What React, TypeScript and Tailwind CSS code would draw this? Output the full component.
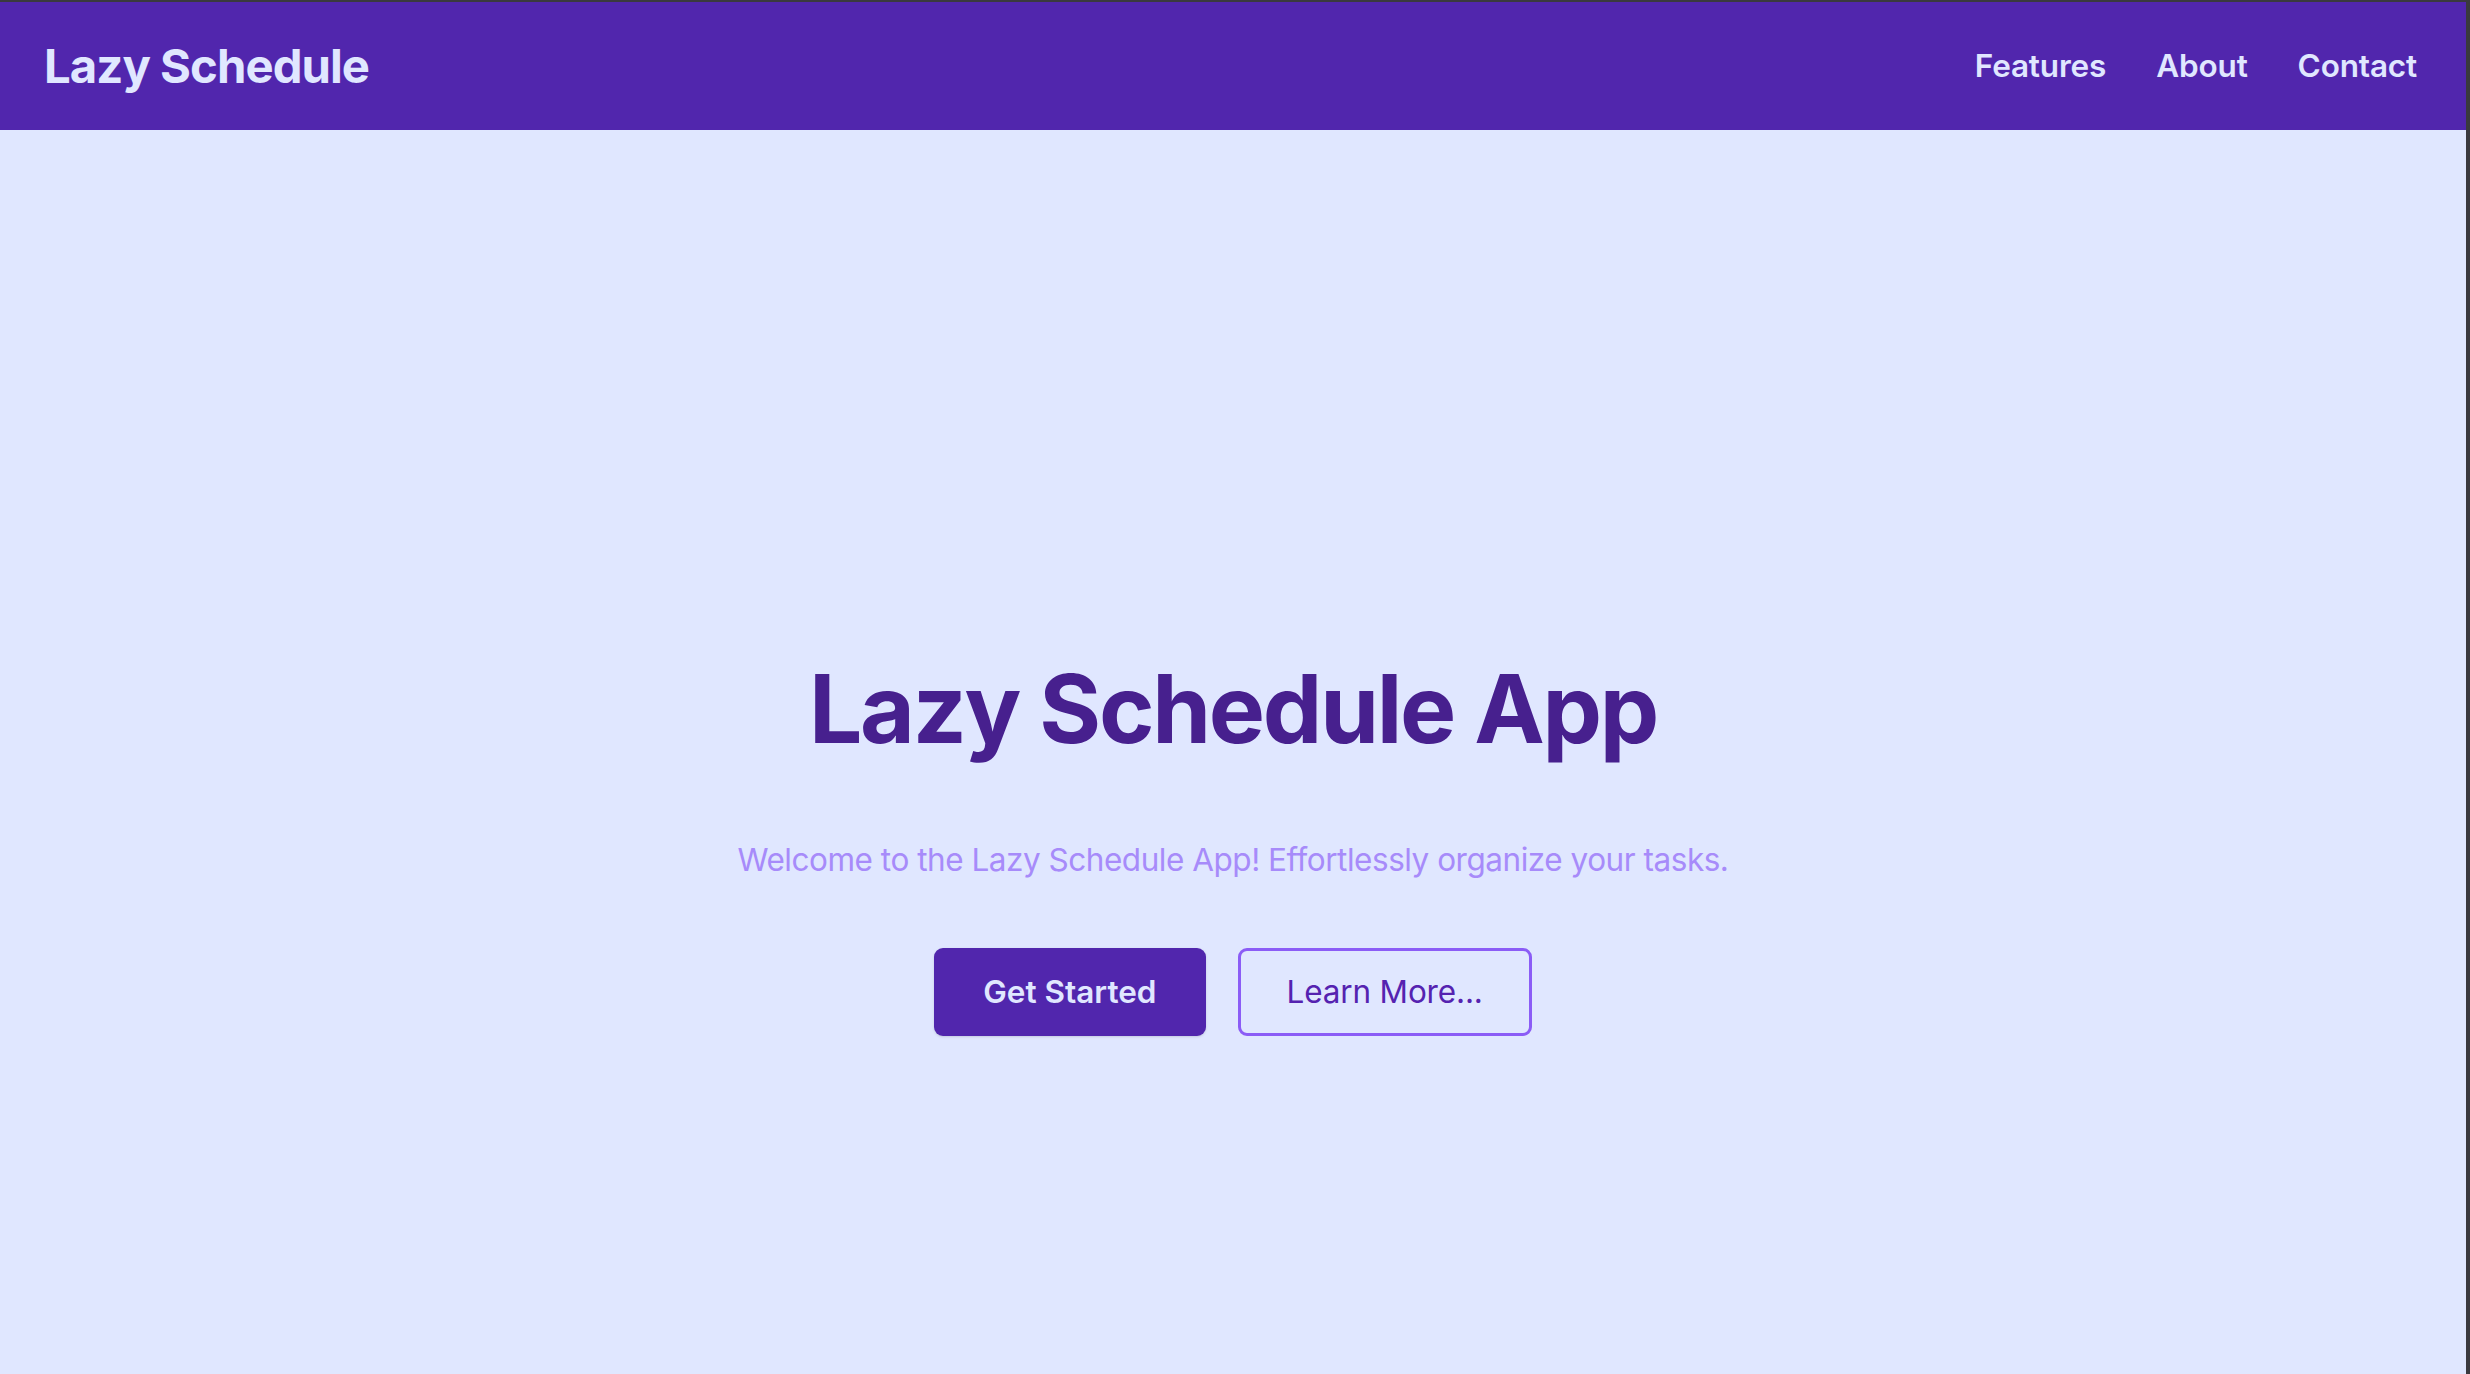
import React from "react";

export default function App() {
  return (
    <div
      className="w-full h-screen bg-[#3a393e] pt-[2px] pr-[4px] overflow-hidden"
      style={{ fontFamily: "Inter, 'Noto Sans', sans-serif" }}
    >
      <div className="flex flex-col w-full h-full bg-[#e0e7ff]">
        <header className="flex items-center justify-between h-[128px] bg-[#5126ad] pl-[44px] pr-[49px] shrink-0">
          <div className="text-[47.25px] font-bold text-[#e0e7ff] leading-none tracking-[-0.02em]">
            Lazy Schedule
          </div>
          <nav className="flex items-center gap-[50px] text-[31.5px] font-semibold text-[#e0e7ff] leading-none tracking-[-0.005em]">
            <a href="#">Features</a>
            <a href="#">About</a>
            <a href="#">Contact</a>
          </nav>
        </header>
        <main className="flex flex-col items-center pt-[532px]">
          <h1 className="text-[94.5px] leading-none font-bold text-[#47208e] tracking-[-0.024em]">
            Lazy Schedule App
          </h1>
          <p className="mt-[81px] text-[31.5px] leading-[44px] text-[#a78bfa] tracking-[-0.015em]">
            Welcome to the Lazy Schedule App! Effortlessly organize your tasks.
          </p>
          <div className="mt-[66px] flex items-center gap-[32px]">
            <button className="h-[88px] px-[49px] rounded-[9px] bg-[#5126ad] text-[#e0e7ff] text-[31.5px] font-semibold leading-none shadow-sm">
              Get Started
            </button>
            <button className="h-[88px] px-[46px] rounded-[9px] border-[3px] border-[#8b5cf6] text-[#5522b0] text-[31.5px] font-normal leading-none tracking-[-0.005em]">
              Learn More...
            </button>
          </div>
        </main>
      </div>
    </div>
  );
}
